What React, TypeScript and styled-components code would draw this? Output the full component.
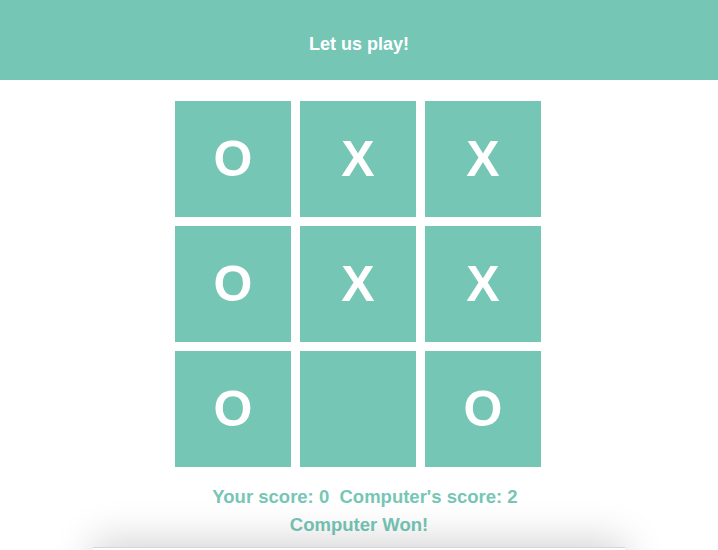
import React from "react";
import styled, { createGlobalStyle } from "styled-components";

const TEAL = "#76c6b6";

const Global = createGlobalStyle`
  html, body { margin: 0; padding: 0; background: #ffffff; }
  body { font-family: "Liberation Sans", Arial, sans-serif; overflow: hidden; }
`;

const Page = styled.div`
  display: flex;
  flex-direction: column;
  align-items: center;
  width: 718px;
  height: 550px;
  overflow: hidden;
  & > * { flex-shrink: 0; }
`;

const Header = styled.header`
  width: 100%;
  height: 80px;
  background: ${TEAL};
  color: #fff;
  display: flex;
  align-items: center;
  justify-content: center;
  font-size: 18px;
  font-weight: bold;
  padding-top: 8px;
  box-sizing: border-box;
`;

const Board = styled.div`
  margin-top: 21px;
  margin-right: 2px;
  display: grid;
  grid-template-columns: repeat(3, 116px);
  grid-auto-rows: 116px;
  gap: 9px;
`;

const Cell = styled.div`
  background: ${TEAL};
  color: #fff;
  display: flex;
  align-items: center;
  justify-content: center;
  font-size: 50px;
  font-weight: bold;
`;

const Info = styled.div`
  margin-top: 16px;
  display: flex;
  flex-direction: column;
  align-items: center;
  color: ${TEAL};
  font-size: 18.5px;
  font-weight: bold;
  line-height: 28px;
`;

const Line = styled.div<{ $shift?: number }>`
  white-space: pre;
  padding-left: ${(p) => p.$shift ?? 0}px;
`;

const Footer = styled.div`
  margin-top: 8px;
  width: 532px;
  height: 60px;
  background: #fff;
  border-top: 1px solid #d6d6d6;
  box-shadow: 0 -6px 40px rgba(0, 0, 0, 0.18);
`;

const cells = ["O", "X", "X", "O", "X", "X", "O", "", "O"];

export default function App() {
  return (
    <>
      <Global />
      <Page>
        <Header>Let us play!</Header>
        <Board>
          {cells.map((c, i) => (
            <Cell key={i}>{c}</Cell>
          ))}
        </Board>
        <Info>
          <Line $shift={12}>{"Your score: 0  Computer's score: 2"}</Line>
          <Line>Computer Won!</Line>
        </Info>
        <Footer />
      </Page>
    </>
  );
}
